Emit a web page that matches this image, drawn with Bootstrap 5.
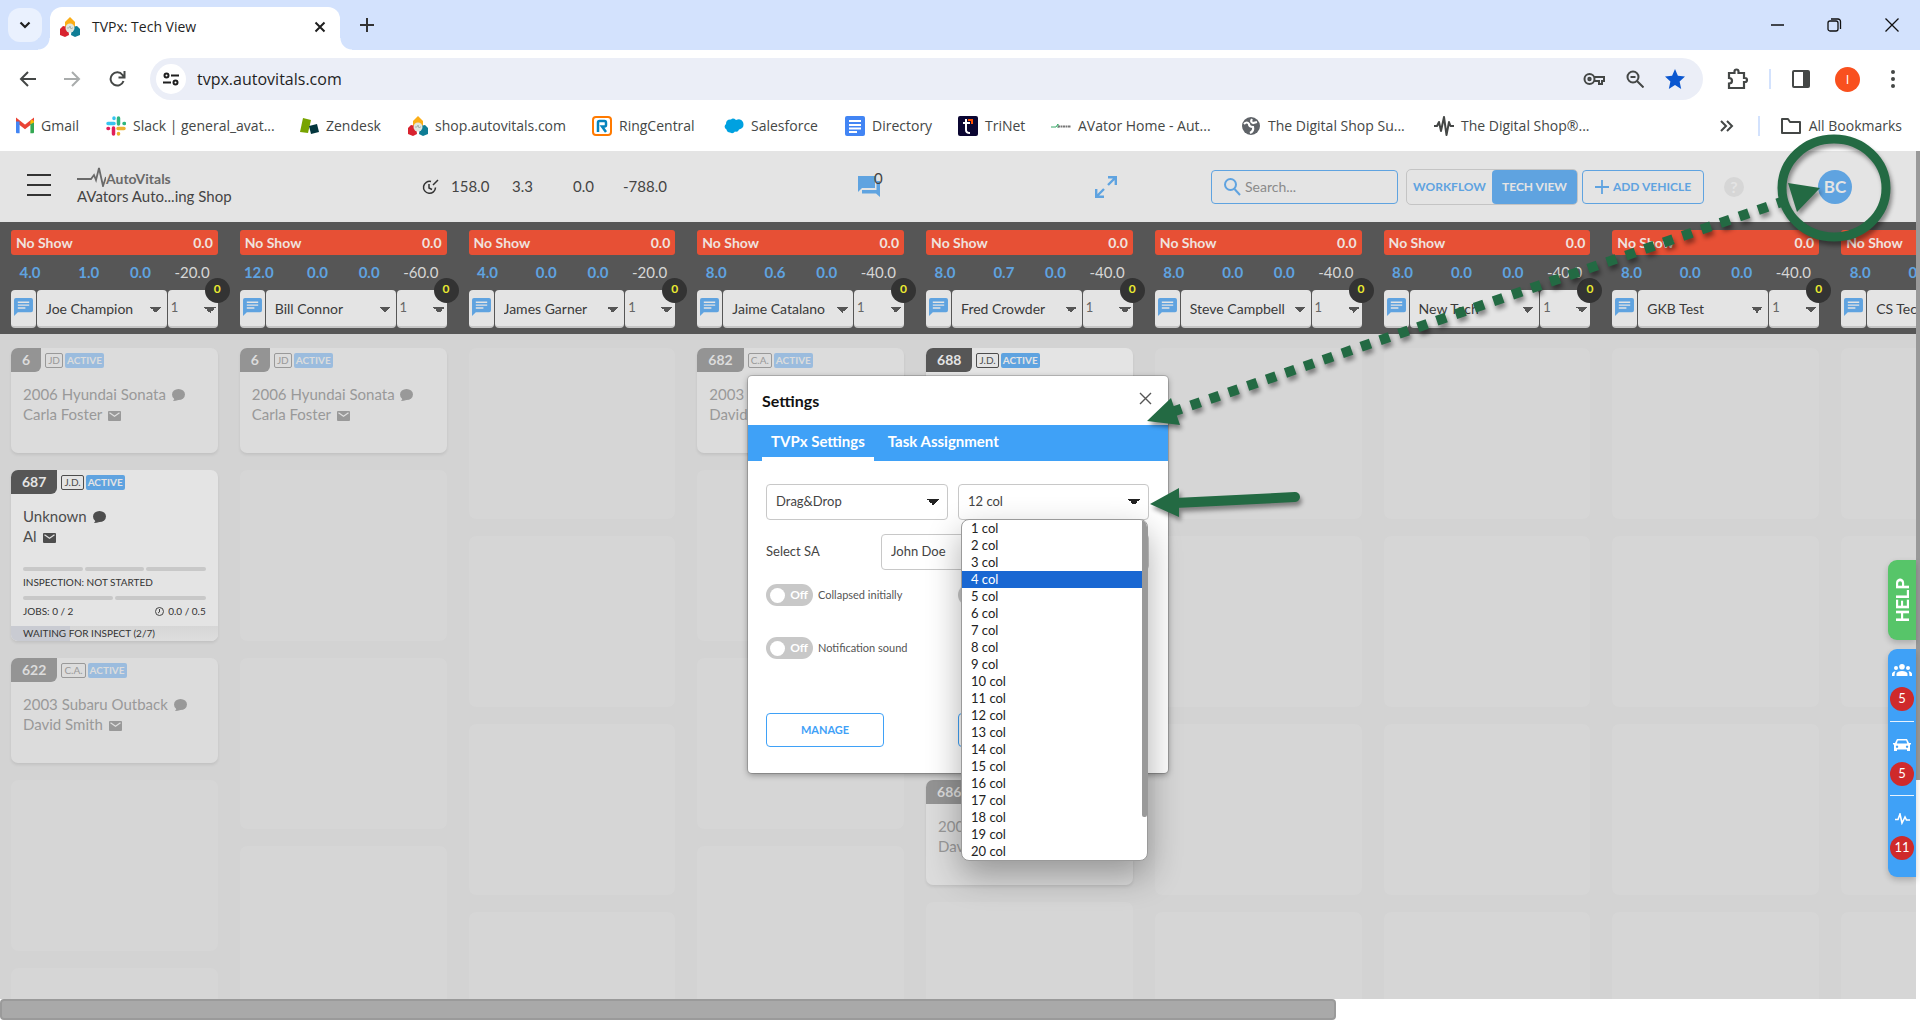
<!DOCTYPE html>
<html lang="en">
<head>
<meta charset="utf-8">
<meta name="viewport" content="width=device-width, initial-scale=1">
<title>TVPx: Tech View</title>
<link href="https://cdn.jsdelivr.net/npm/bootstrap@5.3.0/dist/css/bootstrap.min.css" rel="stylesheet">
<style>
:root{--blue:#5fa3e0;--vivid:#3fa1f7;--dark:#565656;--pale:#e4e4e4;--board:#d3d3d3;--ink:#444}
body{height:100vh;overflow:hidden;position:relative;background:#fff;font-family:"Open Sans","Noto Sans",sans-serif;font-size:14px;color:#444746}
svg{display:block;flex:none}
button{font-family:inherit}
.plain{background:none;border:0;padding:0;color:inherit}
/* browser frame */
.tabstrip{height:50px;background:#d3e2fd;padding-left:8px}
.tab-search{width:34px;height:34px;margin-top:8px;border-radius:12px;background:#eaf1fe}
.browser-tab{width:290px;height:43px;margin:7px 0 0 8px;padding:0 14px 4px 10px;border-radius:12px 12px 0 0;background:#fff;color:#1f1f1f;position:relative}
.browser-tab::before,.browser-tab::after{content:"";position:absolute;bottom:0;width:12px;height:12px}
.browser-tab::before{left:-12px;background:radial-gradient(circle at 0 0,#d3e2fd 11px,#fff 12px)}
.browser-tab::after{right:-12px;background:radial-gradient(circle at 100% 0,#d3e2fd 11px,#fff 12px)}
.win-controls{gap:40px;padding-right:20px;color:#111}
.win-controls .plain{width:17px}
.win-controls svg{margin:auto}
.toolbar{height:58px;padding:0 18px 0 19px}
.nav-keys{gap:28px;margin-right:24px}
.omnibox{height:42px;border-radius:21px;background:#ebeef7;padding:0 18px 0 6px}
.site-chip{width:30px;height:30px;border-radius:50%;background:#fff}
.omnibox input{border:0;background:none;outline:0;font-size:16px;color:#1f1f1f;padding:0 0 0 11px;min-width:0}
.omni-icons{gap:21px}
.tool-icons{gap:20px;margin-left:24px}
.bar-sep{width:2px;height:20px;background:#d3e2fd}
.profile{width:25px;height:25px;border-radius:50%;background:#f9501e;color:#fff;font-size:13px;line-height:25px;text-align:center}
.bookmarks{height:43px;padding:0 18px 8px 16px}
.bookmarks a{color:#444746;text-decoration:none;gap:7px;white-space:nowrap;flex:none}
/* application */
.app{position:relative;font-family:Lato,"Open Sans",sans-serif;background:#fff}
.viewport{background:var(--board)}
.app-head{height:71px;flex:none;background:var(--pale);color:var(--ink);font-size:15px;padding-right:64px}
.app-head>*{flex:none}
.burger{width:24px;height:22px;margin:0 26px 4px 27px;border-top:2px solid #333;border-bottom:2px solid #333;display:flex;align-items:center}
.burger i{height:2px;width:100%;background:#333}
.brand-block{width:345px;line-height:19px}
.brand-name{font-weight:700;font-size:14px;line-height:17px;color:#6a6a6a}
.fig-a{width:61px}.fig-b{width:50px}.fig-c{width:235px}
.talks{width:237px;position:relative}
.talks span{position:absolute;left:16px;top:-8px;line-height:20px}
.btn-app{height:34px;border:1px solid var(--blue);border-radius:4px;color:var(--blue);font-size:12px;font-weight:700;background:transparent;padding:0;white-space:nowrap;width:85px}
.btn-app.wide{width:122px}
.seg{border:1px solid #c4c4c4;border-radius:5px;height:36px}
.seg .btn-app{border:0;border-radius:3px}
.seg .btn-app.on{background:var(--blue);color:var(--pale);border-radius:4px}
.search-box{width:187px;height:34px;border:1px solid var(--blue);border-radius:4px;padding:0 12px;gap:4px;color:var(--blue)}
.search-box input{border:0;background:none;outline:0;min-width:0;width:100%;font-size:14px;color:#555;padding:0}
.search-box input::placeholder{color:#8a8a8a}
.help-dot{width:20px;height:20px;margin:0 74px 0 20px;border-radius:50%;background:#d6d6d6;color:var(--pale);font-weight:700;font-size:16px;line-height:20px;text-align:center}
.avatar{width:34px;height:34px;border-radius:50%;background:var(--blue);color:var(--pale);font-weight:700;font-size:17px;line-height:34px;text-align:center}
.lane{flex:0 0 11.94%;padding:0 11px}
.lanes-head{height:112px;background:var(--dark);padding-top:8px}
.no-show{height:25px;border-radius:3px;background:#e75035;color:#f0e2df;font-weight:700;font-size:14px;padding:0 5px}
.figures{height:35px;font-size:15px;font-weight:700;color:var(--blue);text-align:center}
.figures span{flex:1 1 0}
.figures span:first-child{flex:0 0 38px;margin-right:14px}
.figures span:last-child{color:#d6d6d6;font-weight:400;white-space:nowrap}
.tech{height:38px;position:relative}
.tech>.chat,.tech select{height:38px;border:0;border-bottom:2px solid #c6c6c6;border-radius:4px;background-color:var(--pale)}
.tech>.chat{width:25px;flex:none;display:flex;align-items:flex-start;padding:8px 3px 0;margin-right:1px;color:var(--blue)}
.tech select{appearance:none;color:#3a3a3a;font-size:14px;outline:0;background-image:linear-gradient(to bottom right,#555 50%,transparent 50%),linear-gradient(to bottom left,#555 50%,transparent 50%);background-size:6px 6px;background-repeat:no-repeat;background-position:right 5px top 17px,right 11px top 17px}
.tech .who{flex:1 1 0;min-width:0;padding:0 18px 0 9px;margin-right:1px}
.tech .slot{width:50px;flex:none;padding:0 0 0 3px;color:#666;font-size:13px;background-position:right 2px top 17px,right 8px top 17px}
.tech .cnt{position:absolute;right:-12px;top:-12px;width:25px;height:25px;border-radius:50%;background:#333;color:#eaea31;font-size:12px;font-weight:700;line-height:21px;text-align:center}
.lane-stack{gap:17px;padding-top:14px}
.slotbox{height:171px;flex:none;border-radius:7px;background:#d6d6d6}
.low{height:105px}
.job{background:#e4e4e4;box-shadow:0 2px 3px rgba(0,0,0,.08);color:#4d4d4d;overflow:hidden;display:flex;flex-direction:column}
.job.faded{background:#dcdcdc;color:#999}
.job .num{height:24px;padding:0 11px;border-radius:0 0 6px 0;background:#565656;color:var(--pale);font-weight:700;font-size:14px;line-height:23px}
.job.faded .num{background:#949494;color:#dcdcdc}
.job .tags{gap:2px}
.job .ini{height:15px;margin-left:2px;border:1px solid currentColor;border-radius:2px;font-size:10px;line-height:13px;padding:0 2px}
.job .act{height:15px;border-radius:2px;background:var(--blue);color:var(--pale);font-weight:700;font-size:10px;line-height:15px;padding:0 2px}
.job.faded .act{background:#9bbcde;color:#dcdcdc}
.job .car{padding:12px 12px 0;font-size:15px;line-height:20px;white-space:nowrap}
.job .car svg{display:inline-block;margin-left:2px;vertical-align:-1px}
.meters{padding-top:21px}
.meter{gap:2px;padding:0 12px}
.meter i{flex:1;height:4px;border-radius:2px;background:#c8c8c8}
.note{font-size:10px;line-height:15px;padding:4px 12px 6px;color:#333}
.stage{height:15px;margin-top:auto;background:linear-gradient(#d6d6d6,#dedede);position:relative}
.stage span{position:absolute;inset:0 auto 0 0;background:#c9cbd2}
.stage b{position:relative;font-weight:400;font-size:10px;line-height:14px;padding-left:12px;display:block;color:#333}
.vbar{width:4px;height:629px;background:#999;flex:none}
.hbar{height:21px;background:#fff}
.hbar div{height:21px;width:69.6%;background:#a9a9a9;border:2px solid #9a9a9a;border-radius:4px}
/* side tabs */
.side{position:absolute;right:4px;top:409px;width:28px;gap:9px}
.side>*{border-radius:9px 0 0 9px;box-shadow:0 3px 6px rgba(0,0,0,.2)}
.help-tab{height:80px;background:#57c569;color:#fff;font:700 18px Roboto,"Liberation Sans",sans-serif}
.help-tab span{writing-mode:vertical-rl;transform:rotate(180deg)}
.alerts{background:var(--vivid);color:#fff;height:228px;padding:15px 2px 0}
.alerts a{display:flex;flex-direction:column;align-items:center;color:#fff;text-decoration:none;height:57px}
.alerts a+a{height:74px;border-top:1px solid #e8f3fe;padding-top:17px}
.alerts b{margin-top:11px;width:24px;height:24px;border-radius:50%;background:#cf2a2b;font-weight:400;font-size:13px;line-height:22px;text-align:center}
/* settings window */
.settings{position:absolute;top:225px;left:calc(50% - 2px);width:420px;height:397px;background:#fff;border-radius:4px;box-shadow:0 0 0 1px rgba(0,0,0,.16),0 2px 6px rgba(0,0,0,.35);color:#444;font-size:13px}
.settings h1{font-size:16px;font-weight:700;color:#111;margin:0}
.set-head{height:49px;padding:0 16px 0 14px}
.set-tabs{height:36px;background:var(--vivid);padding-left:14px}
.set-tabs .nav-link{height:36px;padding:0 9px;margin-right:5px;border-radius:0;border:0;border-bottom:4px solid transparent;background:none;color:#fff;font-weight:700;font-size:15px;line-height:32px}
.set-tabs .nav-link.active{border-bottom-color:#fff;color:#fff}
.set-body{padding:23px 19px 0 18px}
.pick{height:36px;border:1px solid #c8c8c8;border-radius:4px;font-size:13px;color:#444;padding:0 28px 0 9px;box-shadow:none;background-image:linear-gradient(to bottom right,#222 50%,transparent 50%),linear-gradient(to bottom left,#222 50%,transparent 50%);background-size:6px 6px;background-position:right 8px center,right 14px center;background-color:#fff}
.mode-cell{width:182px;margin-right:10px}
.set-row{margin-top:14px}
.sa-label{width:115px}
.sound{margin-top:31px}
.set-foot{margin-top:54px}
.half{width:192px}
.switch{height:22px;font-size:11px;color:#555;gap:5px}
.switch input{appearance:none;position:absolute;opacity:0}
.switch .track{width:47px;height:22px;border-radius:11px;background:#c8c8c8;color:#fff;font-weight:700;font-size:12px;line-height:21px;text-align:right;padding-right:5px;position:relative;flex:none}
.switch .track::before{content:"";position:absolute;left:4px;top:4px;width:15px;height:15px;border-radius:50%;background:#fff}
.btn-out{width:118px;height:34px;border:1px solid var(--vivid);border-radius:4px;background:#fff;color:var(--vivid);font-size:11px;font-weight:700;padding:0}
.opts{position:absolute;left:3px;top:35px;width:187px;height:342px;z-index:3;background:#fff;border:1px solid #9a9a9a;border-radius:8px;overflow:hidden;box-shadow:0 14px 34px rgba(0,0,0,.32);color:#222}
.opts ul{margin:0;padding:0;list-style:none;width:181px}
.opts li{height:17px;line-height:17px;padding-left:9px;font-size:13px}
.opts li.hot{background:#1967d2;color:#fff}
.opts i{width:5px;height:297px;background:#999;border-radius:0 0 2px 2px}
.callouts{position:absolute;left:0;top:0;z-index:9;pointer-events:none}
</style>
<script src="https://cdn.jsdelivr.net/npm/bootstrap@5.3.0/dist/js/bootstrap.bundle.min.js"></script>
</head>
<body class="d-flex flex-column">
<svg width="0" height="0" class="position-absolute" aria-hidden="true">
  <symbol id="i-av" viewBox="0 0 20 20"><path d="M5 5 10 0l5 5v6H5z" fill="#fbae17"/><path d="M0 12l3-3 5 1 1 8-4 2-5-2z" fill="#d8232f"/><path d="M20 12l-3-3-5 1-1 8 4 2 5-2z" fill="#0f7d95"/><circle cx="10" cy="11" r="4.500" fill="#dfe6df"/><path d="M7 11h2l1-2 1 3 1-1h1" stroke="#a9b6ad" fill="none"/></symbol>
  <symbol id="i-chat" viewBox="0 0 20 19"><path d="M2 0h16a2 2 0 0 1 2 2v11a2 2 0 0 1-2 2H4l-4 4V2a2 2 0 0 1 2-2z" fill="currentColor"/><path d="M4 4.500h12M4 7.500h12M4 10.500h8" stroke="#e4e4e4" stroke-width="1.500"/></symbol>
  <symbol id="i-bubble" viewBox="0 0 13 12"><ellipse cx="6.500" cy="5.500" rx="6.500" ry="5.500" fill="currentColor"/><path d="M1 12q2-2 1.500-4l4 3q-3 1-5.500 1z" fill="currentColor"/></symbol>
  <symbol id="i-mail" viewBox="0 0 13 10"><rect width="13" height="10" rx="1" fill="currentColor"/><path d="M1.500 1.800 6.500 5.200l5-3.400" stroke="#dedede" stroke-width="1.300" fill="none"/></symbol>
  <symbol id="i-pulse" viewBox="0 0 20 20"><path d="M0 10h3l2-4 2 9L10 1l2.500 18L15 6l1.500 4H20" stroke="currentColor" stroke-width="2" fill="none" stroke-linejoin="round"/></symbol>
</svg>

<header>
  <div class="tabstrip d-flex">
    <button class="plain tab-search d-flex align-items-center justify-content-center" aria-label="Search tabs"><svg width="12" height="8" fill="none" stroke="#1f1f1f" stroke-width="2.200"><path d="M1.500 1.500 6 6l4.500-4.500"/></svg></button>
    <div class="browser-tab d-flex align-items-center">
      <svg width="20" height="20"><use href="#i-av"/></svg>
      <span class="ms-2 ps-1 flex-grow-1">TVPx: Tech View</span>
      <button class="plain" aria-label="Close tab"><svg width="12" height="12" stroke="#1f1f1f" stroke-width="2"><path d="M1.500 1.500l9 9M10.500 1.500l-9 9"/></svg></button>
    </div>
    <button class="plain ms-3 ps-1" aria-label="New tab"><svg width="14" height="14" stroke="#333" stroke-width="2"><path d="M7 0v14M0 7h14"/></svg></button>
    <div class="win-controls ms-auto d-flex align-items-center">
      <button class="plain" aria-label="Minimize"><svg width="13" height="14" stroke="currentColor" stroke-width="1.500"><path d="M0 7h13"/></svg></button>
      <button class="plain" aria-label="Restore"><svg width="15" height="14" fill="none" stroke="currentColor" stroke-width="1.300"><rect x="1" y="3" width="10" height="10" rx="2"/><path d="M4 1h7a2.500 2.500 0 0 1 2.500 2.500V11"/></svg></button>
      <button class="plain" aria-label="Close"><svg width="14" height="14" stroke="currentColor" stroke-width="1.300"><path d="M.5.5l13 13M13.500.5l-13 13"/></svg></button>
    </div>
  </div>
  <div class="toolbar d-flex align-items-center">
    <div class="nav-keys d-flex">
      <button class="plain" aria-label="Back"><svg width="17" height="16" fill="none" stroke="#444746" stroke-width="2"><path d="M17 8H2M9 1 2 8l7 7"/></svg></button>
      <button class="plain" aria-label="Forward"><svg width="17" height="16" fill="none" stroke="#a9acac" stroke-width="2"><path d="M0 8h15M8 1l7 7-7 7"/></svg></button>
      <button class="plain" aria-label="Reload"><svg width="17" height="16" fill="none" stroke="#444746" stroke-width="2"><path d="M14.500 10A6.600 6.600 0 1 1 13.500 4L15 6M15.500 0v6.500H9.500"/></svg></button>
    </div>
    <div class="omnibox d-flex align-items-center flex-grow-1">
      <button class="plain site-chip d-flex align-items-center justify-content-center" aria-label="Site information"><svg width="16" height="14" fill="none" stroke="#1f1f1f" stroke-width="2"><circle cx="3.500" cy="3.500" r="2"/><path d="M8 3.500h8M0 10.500h8"/><circle cx="12.500" cy="10.500" r="2"/></svg></button>
      <input class="flex-grow-1" type="text" aria-label="Address" value="tvpx.autovitals.com">
      <div class="omni-icons d-flex align-items-center">
        <svg width="22" height="14" fill="none" stroke="#444746" stroke-width="2"><circle cx="6.500" cy="7" r="5"/><circle cx="6.500" cy="7" r="1.200"/><path d="M11 5h10v4h-2v3h-3V9h-5"/></svg>
        <svg width="18" height="18" fill="none" stroke="#444746" stroke-width="2"><circle cx="7" cy="7" r="5.500"/><path d="M11 11l6.500 6.500M4.500 7h5"/></svg>
        <svg width="20" height="20" viewBox="0 0 20 20"><path d="M10 0l2.900 6.800 7.100.7-5.400 4.900L16.200 20 10 16l-6.200 4 1.600-7.600L0 7.500l7.100-.7z" fill="#0b57d0"/></svg>
      </div>
    </div>
    <div class="tool-icons d-flex align-items-center">
      <svg width="22" height="22" fill="none" stroke="#444746" stroke-width="2.200"><path d="M2 5h5.500V3.500a2 2 0 0 1 4 0V5H17v5h1a2 2 0 0 1 0 4h-1v6H2v-4.500c4 0 4-5.500 0-5.500z"/></svg>
      <span class="bar-sep"></span>
      <svg width="20" height="18"><rect x="2" y="1" width="16" height="16" rx="1" fill="none" stroke="#444746" stroke-width="2"/><path d="M12 1h6v16h-6z" fill="#444746"/></svg>
      <span class="profile ms-1">I</span>
      <svg width="22" height="18" fill="#444746"><circle cx="13" cy="2" r="2"/><circle cx="13" cy="9" r="2"/><circle cx="13" cy="16" r="2"/></svg>
    </div>
  </div>
  <nav class="bookmarks d-flex align-items-center" aria-label="Bookmarks" id="marks"></nav>
</header>

<main class="app d-flex flex-column flex-grow-1 overflow-hidden">
  <div class="d-flex flex-grow-1 overflow-hidden">
    <div class="viewport flex-grow-1 d-flex flex-column overflow-hidden">
      <div class="app-head d-flex align-items-center">
        <button class="plain burger" aria-label="Menu"><i></i></button>
        <div class="brand-block">
          <div class="brand-name d-flex align-items-end"><svg width="29" height="20" fill="none" stroke="#6a6a6a" stroke-width="1.800"><path d="M0 12h14l3-4 2 5 3-12 4 18 3-9"/></svg>AutoVitals</div>
          <div>AVators Auto...ing Shop</div>
        </div>
        <svg width="17" height="16" fill="none" stroke="#333" stroke-width="1.500"><path d="M9 2.500a6 6 0 1 0 4.500 6M7 5v4l3 1.500M11 6l5-5"/></svg>
        <div class="d-flex ms-2 ps-1">
          <span class="fig-a">158.0</span><span class="fig-a">3.3</span><span class="fig-b">0.0</span><span class="fig-c">-788.0</span>
        </div>
        <div class="talks"><svg width="22" height="21" viewBox="0 0 22 21"><path d="M0 0h17v12H4l-4 4z" fill="#5fa3e0"/><path d="M18.500 5H22v16l-4-3.500H4V14h14.500z" fill="#5fa3e0"/></svg><span>0</span></div>
        <svg width="22" height="22" viewBox="0 0 22 22" fill="none" stroke="#5fa3e0" stroke-width="2.400"><path d="M13 1.200h7.800V9M20.500 1.500 13 9M1.200 13v7.800H9M1.500 20.500 9 13"/></svg>
        <div class="d-flex align-items-center ms-auto">
          <label class="search-box d-flex align-items-center me-2"><svg width="17" height="18" fill="none" stroke="currentColor" stroke-width="2"><circle cx="6.500" cy="6.500" r="5.500"/><path d="M10.500 11l5.500 6"/></svg><input type="search" placeholder="Search..." aria-label="Search"></label>
          <div class="seg d-flex"><button class="btn-app">WORKFLOW</button><button class="btn-app on">TECH VIEW</button></div>
          <button class="btn-app wide d-flex align-items-center justify-content-center ms-1"><svg width="14" height="14" stroke="currentColor" stroke-width="1.800" class="me-1"><path d="M7 0v14M0 7h14"/></svg>ADD VEHICLE</button>
          <span class="help-dot">?</span>
          <button class="plain avatar">BC</button>
        </div>
      </div>
      <div class="lanes-head d-flex overflow-hidden flex-shrink-0" id="heads"></div>
      <div class="d-flex flex-grow-1 overflow-hidden" id="stacks"></div>
    </div>
    <div class="vbar"></div>
  </div>
  <div class="hbar"><div></div></div>

  <div class="side d-flex flex-column">
    <button class="plain help-tab d-flex align-items-center justify-content-center"><span>HELP</span></button>
    <div class="alerts">
      <a href="#people"><svg width="20" height="12" viewBox="0 0 20 12" fill="#fff"><circle cx="10" cy="2.800" r="2.800"/><circle cx="4" cy="4" r="2"/><circle cx="16" cy="4" r="2"/><path d="M4.500 12V9.500q1-2.500 5.500-2.500t5.500 2.500V12zM0 12V9.500q.5-2 3.500-2.500-1 2-1 5zM20 12V9.500q-.5-2-3.500-2.500 1 2 1 5z"/></svg><b>5</b></a>
      <a href="#cars"><svg width="18" height="12" viewBox="0 0 18 12" fill="#fff" fill-rule="evenodd"><path d="M4 0h10l2 4h2v1.500h-1V12h-3v-1.500H4V12H1V5.500H0V4h2zm.800 1.500L3.800 4.500h10.400l-1-3zM4 6.500a1.200 1.200 0 1 0 .1 0zm10 0a1.200 1.200 0 1 0 .1 0z"/></svg><b>5</b></a>
      <a href="#health"><svg width="15" height="12" fill="none" stroke="#fff" stroke-width="1.600"><path d="M0 6.500h3l2-5.500 2 9 3-6 1.500 3H15"/></svg><b>11</b></a>
    </div>
  </div>

  <section class="settings translate-middle-x" role="dialog" aria-labelledby="set-title">
    <div class="set-head d-flex align-items-center justify-content-between"><h1 id="set-title">Settings</h1><button class="plain pb-1" aria-label="Close settings"><svg width="13" height="13" stroke="#555" stroke-width="1.400"><path d="M1 1l11 11M12 1 1 12"/></svg></button></div>
    <div class="set-tabs nav" role="tablist"><button class="nav-link active" role="tab">TVPx Settings</button><button class="nav-link" role="tab">Task Assignment</button></div>
    <div class="set-body">
      <div class="d-flex">
        <div class="mode-cell"><select class="form-select pick" aria-label="Mode"><option>Drag&amp;Drop</option></select></div>
        <div class="position-relative flex-grow-1">
          <select class="form-select pick" aria-label="Columns" id="cols"></select>
          <div class="opts d-flex"><ul role="listbox" id="collist"></ul><i></i></div>
        </div>
      </div>
      <div class="set-row d-flex align-items-center"><label class="sa-label" for="sa">Select SA</label><select class="form-select pick flex-grow-1 w-auto" id="sa"><option>John Doe</option></select></div>
      <div class="set-row d-flex">
        <label class="switch half d-flex align-items-center"><input type="checkbox"><span class="track">Off</span>Collapsed initially</label>
        <label class="switch d-flex align-items-center"><input type="checkbox" aria-label="Compact"><span class="track"></span></label>
      </div>
      <label class="switch half sound d-flex align-items-center"><input type="checkbox"><span class="track">Off</span>Notification sound</label>
      <div class="set-foot d-flex"><div class="half"><button class="btn-out">MANAGE</button></div><button class="btn-out" aria-label="Save"></button></div>
    </div>
  </section>
</main>

<svg class="callouts" width="1920" height="1020" viewBox="0 0 1920 1020" aria-hidden="true">
  <g fill="none" stroke="#236a43" style="filter:drop-shadow(2px 4px 2px rgba(0,0,0,.4))">
    <ellipse cx="1834" cy="188" rx="52" ry="49" stroke-width="9"/>
    <path d="M1172 412 1793 198" stroke-width="10" stroke-dasharray="10 10"/>
    <path d="M1175 503 1295 497" stroke-width="10" stroke-linecap="round"/>
    <path d="M1820 188 1788 183l9 29zM1147 421l24-23 9 27zM1150 504l29-16v29z" fill="#236a43" stroke="none"/>
  </g>
</svg>

<script>
const bookmarks = [
  ['Gmail','<path d="M1 16V4l9 7 9-7v12" fill="none" stroke="#ea4335" stroke-width="4"/><path d="M0 5h4v13H1a1 1 0 0 1-1-1z" fill="#4285f4"/><path d="M16 5h4v12a1 1 0 0 1-1 1h-3z" fill="#34a853"/><path d="M16 8V5l1-2q3 0 3 3z" fill="#fbbc04"/>',18,39],
  ['Slack | general_avat...','<g stroke-width="3.500" stroke-linecap="round"><path d="M2 7.500h6M8 2v.5" stroke="#36c5f0"/><path d="M12.500 2v6M18 7.500h.5" stroke="#2eb67d"/><path d="M12 12.500h6M12.500 17.500v.5" stroke="#ecb22e"/><path d="M7.500 12v6M2 12.500h.5" stroke="#e01e5a"/></g>',20,140],
  ['Zendesk','<path d="M4 2l8 2-3 13-8-1z" fill="#78a300"/><path d="M10 10l8-2 2 8-8 2z" fill="#03363d"/>',20,56],
  ['shop.autovitals.com','<use href="#i-av"/>',20,131],
  ['RingCentral','<rect x="1" y="1" width="18" height="18" rx="3" fill="#fff" stroke="#ff7a00" stroke-width="2"/><path d="M6 16V6.500Q6 5 7.500 5h5Q14 5 14 7v2q0 1.500-1.500 1.500H10l4 5.500" fill="none" stroke="#0684bd" stroke-width="2.500"/>',20,79],
  ['Salesforce','<path d="M2 8q0-5 5-4.500Q9 1.500 12 4q5-2 7 2 2 6-4 7.500-1 3-4 2-2 3-5 1-3 0-3.500-3Q-1 11 2 8z" fill="#00a1e0"/>',20,68],
  ['Directory','<rect width="20" height="20" rx="2" fill="#4285f4"/><path d="M4 5h12M4 9h12M4 12.500h12M4 16h8" stroke="#fff" stroke-width="2"/>',20,60],
  ['TriNet','<rect width="20" height="20" rx="2" fill="#0b0632"/><path d="M8 3v11q0 3 4 3M5 7h7" stroke="#fff" stroke-width="2" fill="none"/><path d="M10 3h5v5h-2V5h-3z" fill="#ff5000"/>',20,40],
  ['AVator Home - Aut...','<path d="M0 11h5l2-3v4" stroke="#37a866" fill="none"/><path d="M7 10.500h13" stroke="#777" stroke-width="2" stroke-dasharray="2 .5"/>',20,137],
  ['The Digital Shop Su...','<circle cx="10" cy="10" r="9" fill="#5f6368"/><path d="M3 8q3-3 5 0 0 3 4 3 1 4-3 6M11 3q-2 3 1 4l4-1" stroke="#fff" stroke-width="2.200" fill="none"/>',20,140],
  ['The Digital Shop®...','<use href="#i-pulse"/>',20,134]
];
document.getElementById('marks').innerHTML = bookmarks.map(([t,i,w,tw])=>
  `<a href="#" class="d-flex align-items-center" style="width:${w+tw+33}px"><svg width="${w}" height="${w}" viewBox="0 0 20 20">${i}</svg>${t}</a>`).join('') +
  `<a href="#" class="ms-auto" aria-label="More bookmarks"><svg width="14" height="12" fill="none" stroke="#444746" stroke-width="2"><path d="M1 1l5 5-5 5M7 1l5 5-5 5"/></svg></a><span class="bar-sep ms-4 me-3"></span>
   <a href="#" class="d-flex align-items-center ps-1"><svg width="22" height="18" fill="none" stroke="#444746" stroke-width="2"><path d="M2 2h6l2 3h10v11H2z" stroke-linejoin="round"/></svg>All Bookmarks</a>`;

const techs = [
  ['Joe Champion','4.0','1.0','0.0','-20.0'],['Bill Connor','12.0','0.0','0.0','-60.0'],['James Garner','4.0','0.0','0.0','-20.0'],
  ['Jaime Catalano','8.0','0.6','0.0','-40.0'],['Fred Crowder','8.0','0.7','0.0','-40.0'],['Steve Campbell','8.0','0.0','0.0','-40.0'],
  ['New Tech','8.0','0.0','0.0','-40.0'],['GKB Test','8.0','0.0','0.0','-40.0'],['CS Tech','8.0','0.0','0.0','-40.0']];
document.getElementById('heads').innerHTML = techs.map(([name,...f])=>`
  <div class="lane">
    <div class="no-show d-flex justify-content-between align-items-center"><span>No Show</span><span>0.0</span></div>
    <div class="figures d-flex align-items-center">${f.map(v=>`<span>${v}</span>`).join('')}</div>
    <div class="tech d-flex"><button class="chat" aria-label="Messages"><svg width="19" height="18"><use href="#i-chat"/></svg></button><select class="who" aria-label="Technician"><option>${name}</option></select><select class="slot" aria-label="Position"><option>1</option></select><span class="cnt">0</span></div>
  </div>`).join('');

const empty = '<div class="slotbox"></div>', emptyLow = '<div class="slotbox low"></div>';
const job = (num,ini,car,who,faded=true,extra='') => `
  <article class="slotbox job ${faded?'faded low':''}">
    <div class="tags d-flex align-items-center"><span class="num">${num}</span><span class="ini">${ini}</span><span class="act">ACTIVE</span></div>
    <div class="car">${car} <svg width="13" height="12"><use href="#i-bubble"/></svg><br>${who} <svg width="13" height="10"><use href="#i-mail"/></svg></div>${extra}
  </article>`;
const progress = `<div class="meters"><div class="meter d-flex"><i></i><i></i><i></i></div><div class="note">INSPECTION: NOT STARTED</div>
  <div class="meter d-flex"><i></i><i></i></div>
  <div class="note d-flex justify-content-between"><span>JOBS: 0 / 2</span><span class="d-flex align-items-center gap-1"><svg width="9" height="9" fill="none" stroke="#444"><circle cx="4.500" cy="4.500" r="4"/><path d="M4.500 2v3L3 6"/></svg>0.0 / 0.5</span></div></div>
  <div class="stage"><span style="width:28.500%"></span><b>WAITING FOR INSPECT (2/7)</b></div>`;
const stacks = [
  [job(6,'JD','2006 Hyundai Sonata','Carla Foster'),job(687,'J.D.','Unknown','Al',false,progress),job(622,'C.A.','2003 Subaru Outback','David Smith'),empty,empty],
  [job(6,'JD','2006 Hyundai Sonata','Carla Foster'),empty,empty,empty],
  [empty,empty,empty,empty],
  [job(682,'C.A.','2003 Subaru Outback','David Smith'),empty,empty,empty],
  [job(688,'J.D.','Unknown','Al',false),emptyLow,emptyLow,job(686,'C.A.','2003 Subaru Outback','David Smith'),empty],
  ...Array.from({length:4},()=>[empty,empty,empty,empty])];
document.getElementById('stacks').innerHTML = stacks.map(s=>`<div class="lane lane-stack d-flex flex-column">${s.join('')}</div>`).join('');

const names = Array.from({length:20},(_,i)=>`${i+1} col`);
document.getElementById('cols').innerHTML = names.map((n,i)=>`<option${i===11?' selected':''}>${n}</option>`).join('');
document.getElementById('collist').innerHTML = names.map((n,i)=>`<li role="option"${i===3?' class="hot"':''}>${n}</li>`).join('');
</script>
</body>
</html>
